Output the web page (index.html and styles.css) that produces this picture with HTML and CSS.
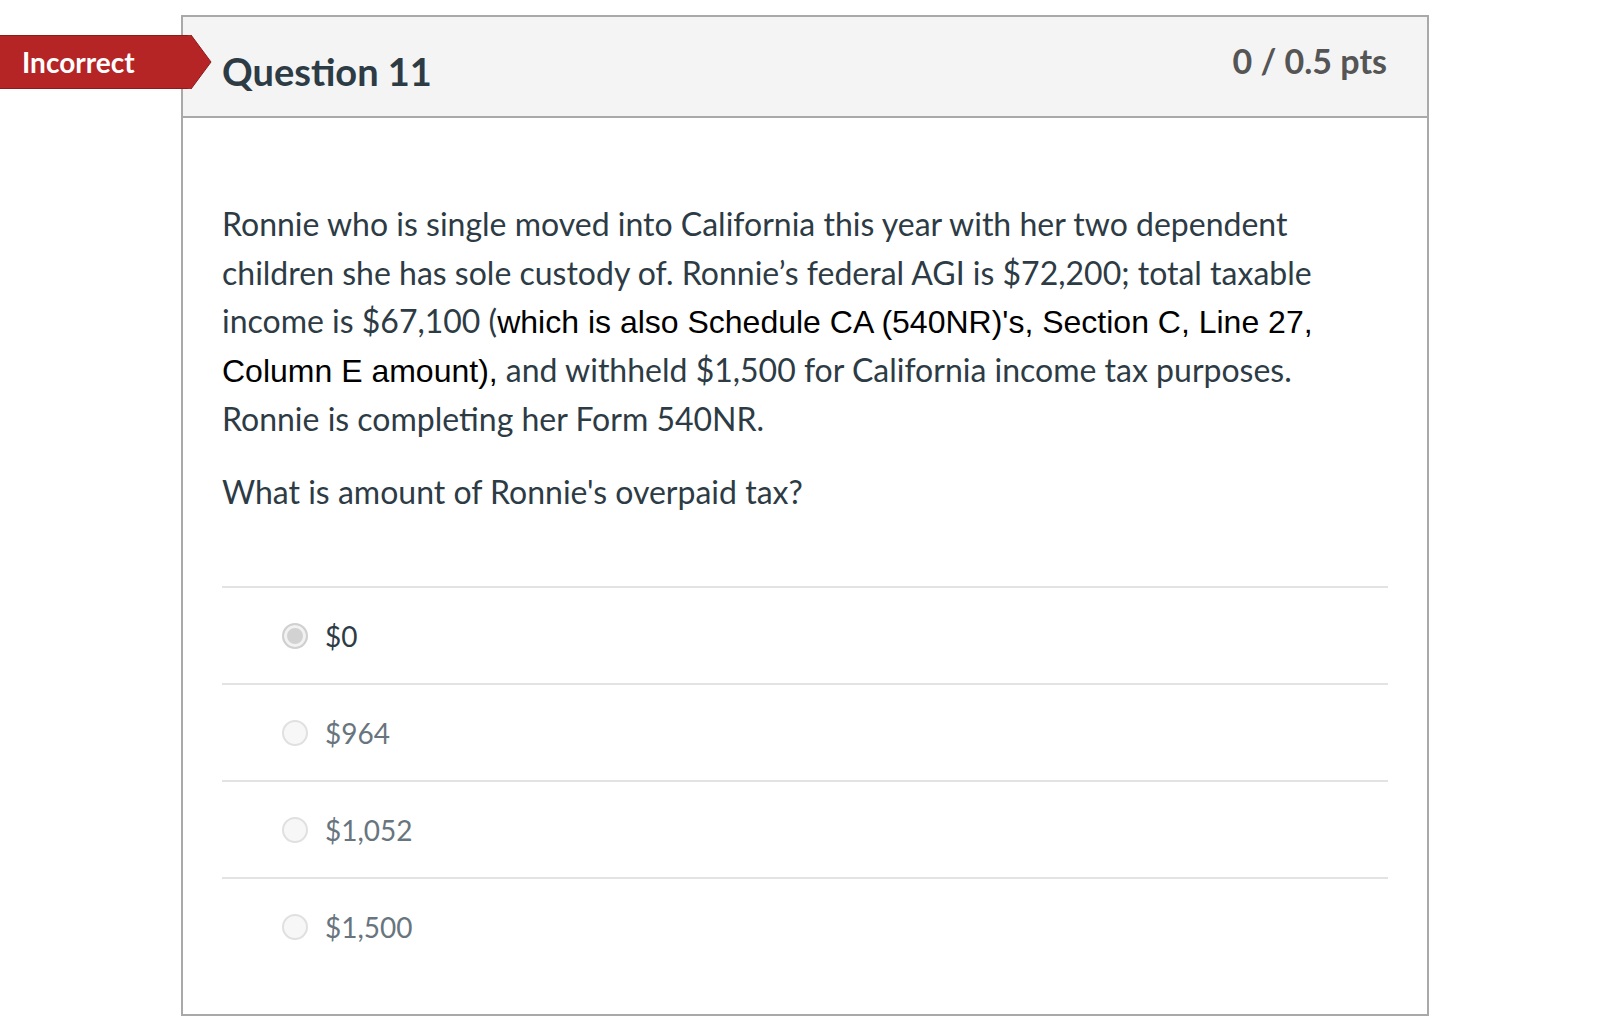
FILE: index.html
```html
<!DOCTYPE html>
<html lang="en">
<head>
<meta charset="utf-8">
<title>Question 11</title>
<link rel="stylesheet" href="styles.css">
</head>
<body>
<div class="page">
  <div class="badge">
    <span class="badge-text">Incorrect</span>
    <svg class="badge-arrow" width="24" height="54" viewBox="0 0 24 54"><polygon points="0,0 3,0 23,27 3,54 0,54" fill="#b52525"/><polyline points="3,0 23,27 3,54" fill="none" stroke="#8e1a1a" stroke-width="1"/></svg>
  </div>
  <div class="card">
    <div class="card-header">
      <h2 class="title">Question 11</h2>
      <div class="pts">0 / 0.5 pts</div>
    </div>
    <div class="card-body">
      <p class="qtext">Ronnie who is single moved into California this year with her two dependent children she has sole custody of. Ronnie’s federal AGI is $72,200; total taxable income is $67,100 (<span class="alt">which is also Schedule CA (540NR)'s, Section C, Line 27, Column E amount),</span> and withheld $1,500 for California income tax purposes. Ronnie is completing her Form 540NR.</p>
      <p class="qtext q2">What is amount of Ronnie's overpaid tax?</p>
      <div class="answers">
        <div class="answer"><span class="radio selected"></span><span class="label chosen">$0</span></div>
        <div class="answer"><span class="radio"></span><span class="label">$964</span></div>
        <div class="answer"><span class="radio"></span><span class="label">$1,052</span></div>
        <div class="answer"><span class="radio"></span><span class="label">$1,500</span></div>
      </div>
    </div>
  </div>
</div>
</body>
</html>
```
FILE: styles.css
```css
html, body {
  margin: 0;
  padding: 0;
  background: #ffffff;
}
body {
  font-family: Lato, "Open Sans", sans-serif;
  color: #2d3b45;
}
.page {
  position: relative;
  padding: 15px 0 0 181px;
  width: 1248px;
}
.badge {
  position: absolute;
  left: 0;
  top: 35px;
  height: 54px;
  display: flex;
  z-index: 2;
}
.badge-text {
  display: flex;
  align-items: center;
  width: 188px;
  box-sizing: border-box;
  padding-left: 22px;
  background: #b52525;
  border-top: 1px solid #8e1a1a;
  border-bottom: 1px solid #8e1a1a;
  color: #ffffff;
  font-size: 28px;
  font-weight: 700;
}
.badge-arrow {
  display: block;
}
.card {
  border: 2px solid #a9a9a9;
  background: #ffffff;
}
.card-header {
  background: #f4f4f4;
  border-bottom: 2px solid #a9a9a9;
  height: 101px;
  box-sizing: border-box;
  padding: 0 40px 0 39px;
  display: flex;
  justify-content: space-between;
  align-items: flex-start;
}
.title {
  margin: 30px 0 0 0;
  font-size: 38px;
  font-weight: 700;
  line-height: 48px;
  color: #2d3b45;
}
.pts {
  margin-top: 22px;
  font-size: 34px;
  font-weight: 700;
  line-height: 44px;
  color: #555555;
}
.card-body {
  padding: 82px 39px 40px 39px;
}
.qtext {
  margin: 0;
  font-size: 32px;
  line-height: 48.7px;
  color: #2d3b45;
}
.alt {
  font-family: "Liberation Sans", Arial, sans-serif;
  color: #000000;
  font-size: 32px;
  line-height: 1;
}
.q2 {
  margin-top: 24px;
}
.answers {
  margin-top: 70px;
}
.answer {
  border-top: 2px solid #e3e3e3;
  height: 95px;
  display: flex;
  align-items: center;
  padding-left: 60px;
  gap: 17px;
}
.radio {
  width: 22px;
  height: 22px;
  border-radius: 50%;
  border: 2px solid #e0e0e0;
  background: #f7f7f7;
  flex: none;
}
.radio.selected {
  background: #d2d2d2;
  box-shadow: inset 0 0 0 3px #f2f2f2;
  border-color: #d0d0d0;
}
.label {
  font-size: 28px;
  color: #68757e;
}
.label.chosen {
  color: #2d3b45;
}
```
